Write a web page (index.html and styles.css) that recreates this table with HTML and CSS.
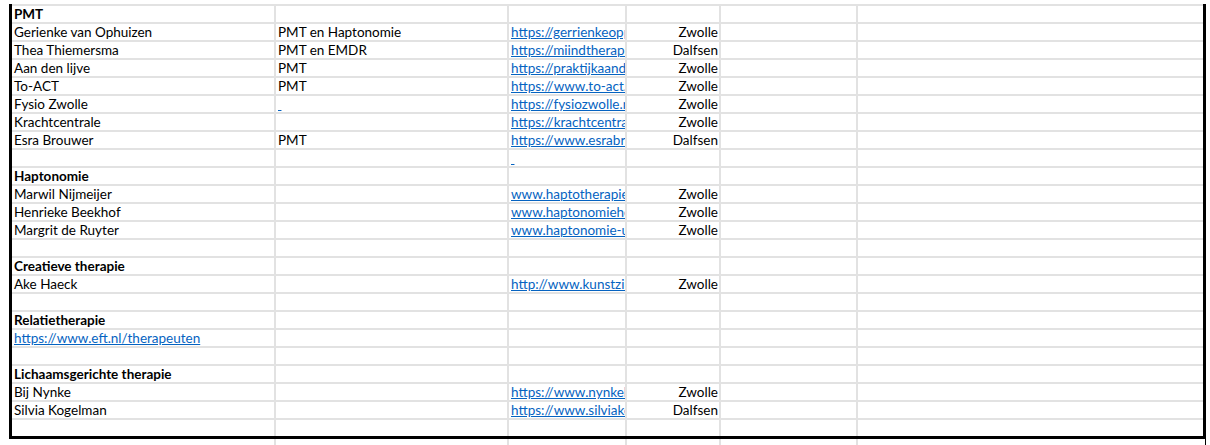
FILE: index.html
```html
<!DOCTYPE html>
<html lang="nl">
<head>
<meta charset="utf-8">
<title>Therapeuten</title>
<link rel="stylesheet" href="styles.css">
</head>
<body>
<div class="sheet">
  <div class="grid">
    <div class="row"><div class="c h">PMT</div><div class="c"></div><div class="c"></div><div class="c"></div><div class="c"></div><div class="c"></div></div>
    <div class="row"><div class="c">Gerienke van Ophuizen</div><div class="c">PMT en Haptonomie</div><div class="c"><a href="#">https://gerrienkeopp.nl</a></div><div class="c r">Zwolle</div><div class="c"></div><div class="c"></div></div>
    <div class="row"><div class="c">Thea Thiemersma</div><div class="c">PMT en EMDR</div><div class="c"><a href="#">https://miindtherapie.nl</a></div><div class="c r">Dalfsen</div><div class="c"></div><div class="c"></div></div>
    <div class="row"><div class="c">Aan den lijve</div><div class="c">PMT</div><div class="c"><a href="#">https://praktijkaanden.nl</a></div><div class="c r">Zwolle</div><div class="c"></div><div class="c"></div></div>
    <div class="row"><div class="c">To-ACT</div><div class="c">PMT</div><div class="c"><a href="#">https://www.to-act.nl</a></div><div class="c r">Zwolle</div><div class="c"></div><div class="c"></div></div>
    <div class="row"><div class="c">Fysio Zwolle</div><div class="c"><a href="#" class="sp">&nbsp;</a></div><div class="c"><a href="#">https://fysiozwolle.nl</a></div><div class="c r">Zwolle</div><div class="c"></div><div class="c"></div></div>
    <div class="row"><div class="c">Krachtcentrale</div><div class="c"></div><div class="c"><a href="#">https://krachtcentrale.nl</a></div><div class="c r">Zwolle</div><div class="c"></div><div class="c"></div></div>
    <div class="row"><div class="c">Esra Brouwer</div><div class="c">PMT</div><div class="c"><a href="#">https://www.esrabrouwer.nl</a></div><div class="c r">Dalfsen</div><div class="c"></div><div class="c"></div></div>
    <div class="row"><div class="c"></div><div class="c"></div><div class="c"><a href="#" class="sp">&nbsp;</a></div><div class="c"></div><div class="c"></div><div class="c"></div></div>
    <div class="row"><div class="c h">Haptonomie</div><div class="c"></div><div class="c"></div><div class="c"></div><div class="c"></div><div class="c"></div></div>
    <div class="row"><div class="c">Marwil Nijmeijer</div><div class="c"></div><div class="c"><a href="#">www.haptotherapie.nl</a></div><div class="c r">Zwolle</div><div class="c"></div><div class="c"></div></div>
    <div class="row"><div class="c">Henrieke Beekhof</div><div class="c"></div><div class="c"><a href="#">www.haptonomiehe.nl</a></div><div class="c r">Zwolle</div><div class="c"></div><div class="c"></div></div>
    <div class="row"><div class="c">Margrit de Ruyter</div><div class="c"></div><div class="c"><a href="#">www.haptonomie-u.nl</a></div><div class="c r">Zwolle</div><div class="c"></div><div class="c"></div></div>
    <div class="row"><div class="c"></div><div class="c"></div><div class="c"></div><div class="c"></div><div class="c"></div><div class="c"></div></div>
    <div class="row"><div class="c h">Creatieve therapie</div><div class="c"></div><div class="c"></div><div class="c"></div><div class="c"></div><div class="c"></div></div>
    <div class="row"><div class="c">Ake Haeck</div><div class="c"></div><div class="c"><a href="#">http://www.kunstzin.nl</a></div><div class="c r">Zwolle</div><div class="c"></div><div class="c"></div></div>
    <div class="row"><div class="c"></div><div class="c"></div><div class="c"></div><div class="c"></div><div class="c"></div><div class="c"></div></div>
    <div class="row"><div class="c h">Relatietherapie</div><div class="c"></div><div class="c"></div><div class="c"></div><div class="c"></div><div class="c"></div></div>
    <div class="row"><div class="c"><a href="#">https://www.eft.nl/therapeuten</a></div><div class="c"></div><div class="c"></div><div class="c"></div><div class="c"></div><div class="c"></div></div>
    <div class="row"><div class="c"></div><div class="c"></div><div class="c"></div><div class="c"></div><div class="c"></div><div class="c"></div></div>
    <div class="row"><div class="c h">Lichaamsgerichte therapie</div><div class="c"></div><div class="c"></div><div class="c"></div><div class="c"></div><div class="c"></div></div>
    <div class="row"><div class="c">Bij Nynke</div><div class="c"></div><div class="c"><a href="#">https://www.nynkeli.nl</a></div><div class="c r">Zwolle</div><div class="c"></div><div class="c"></div></div>
    <div class="row"><div class="c">Silvia Kogelman</div><div class="c"></div><div class="c"><a href="#">https://www.silviako.nl</a></div><div class="c r">Dalfsen</div><div class="c"></div><div class="c"></div></div>
    <div class="row"><div class="c"></div><div class="c"></div><div class="c"></div><div class="c"></div><div class="c"></div><div class="c"></div></div>
  </div>
</div>
<div class="tail">
  <div class="tail-grid"><div class="t"></div><div class="t"></div><div class="t"></div><div class="t"></div><div class="t"></div><div class="t"></div></div>
  <div class="tick"></div>
</div>
</body>
</html>
```
FILE: styles.css
```css
html, body {
  margin: 0;
  padding: 0;
  background: #fff;
}
body {
  font-family: Lato, "Open Sans", "Liberation Sans", sans-serif;
  font-size: 13.5px;
  color: #000;
}
.sheet {
  margin: 4px 0 0 9px;
  width: 1191px;
  border-left: 3px solid #000;
  border-right: 3px solid #000;
  border-bottom: 3px solid #000;
}
.grid {
  display: grid;
  grid-template-columns: 262px 231px 116px 92px 135px 345px;
  grid-auto-rows: 16px;
  gap: 2px;
  padding-top: 2px;
  background: #e2e2e2;
}
.row {
  display: contents;
}
.c {
  background: #fff;
  line-height: 16px;
  padding: 0 2px 0 2px;
  white-space: nowrap;
  overflow: hidden;
  text-overflow: clip;
}
.c.r {
  text-align: right;
  padding-right: 1px;
}
.c.h {
  font-weight: 700;
}
a {
  color: #0563c1;
  text-decoration: underline;
  text-underline-offset: 1px;
}
.tail {
  display: flex;
  margin-left: 12px;
  height: 7px;
}
.tail-grid {
  display: grid;
  grid-template-columns: 262px 231px 116px 92px 135px 345px;
  gap: 2px;
  background: #e2e2e2;
  width: 1191px;
}
.t {
  background: #fff;
}
.tick {
  width: 1px;
  margin-left: 2px;
  background: #000;
}
```
